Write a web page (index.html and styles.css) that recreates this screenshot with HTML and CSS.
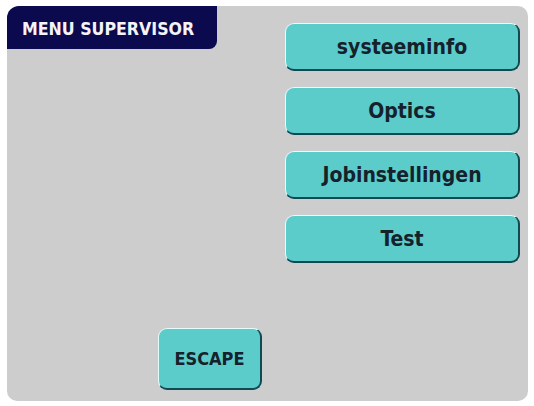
FILE: index.html
```html
<!DOCTYPE html>
<html>
<head>
<meta charset="utf-8">
<link rel="stylesheet" href="styles.css">
</head>
<body>
<div class="panel">
  <div class="left">
    <div class="title">MENU SUPERVISOR</div>
    <div class="btn escape">ESCAPE</div>
  </div>
  <div class="right">
    <div class="btn menu">systeeminfo</div>
    <div class="btn menu">Optics</div>
    <div class="btn menu">Jobinstellingen</div>
    <div class="btn menu">Test</div>
  </div>
</div>
</body>
</html>
```
FILE: styles.css
```css
html, body {
  margin: 0;
  padding: 0;
  background: #ffffff;
}
body {
  font-family: "DejaVu Sans Condensed", "DejaVu Sans", sans-serif;
  font-weight: bold;
}
.panel {
  margin: 6px 0 0 7px;
  width: 521px;
  height: 395px;
  background: #cdcdcd;
  border-radius: 12px 10px 10px 10px;
  display: flex;
}
.left {
  width: 278px;
  display: flex;
  flex-direction: column;
  justify-content: space-between;
}
.title {
  width: 195px;
  height: 43px;
  padding-left: 15px;
  box-sizing: content-box;
  background: #0b0a4e;
  color: #f4f4f8;
  border-radius: 12px 0 8px 0;
  font-size: 17.6px;
  line-height: 46px;
}
.btn {
  box-sizing: border-box;
  background: #5ccccb;
  color: #15222c;
  border-style: solid;
  border-width: 1px 2px 2px 1px;
  border-color: #e6fbfb #0f4a52 #0f4a52 #e6fbfb;
  border-radius: 9px;
  display: flex;
  align-items: center;
  justify-content: center;
  font-size: 21px;
}
.escape {
  margin: 0 0 11px 151px;
  width: 104px;
  height: 62px;
  font-size: 18px;
}
.right {
  padding-top: 17px;
  display: flex;
  flex-direction: column;
  gap: 16px;
}
.menu {
  width: 235px;
  height: 48px;
}
```
